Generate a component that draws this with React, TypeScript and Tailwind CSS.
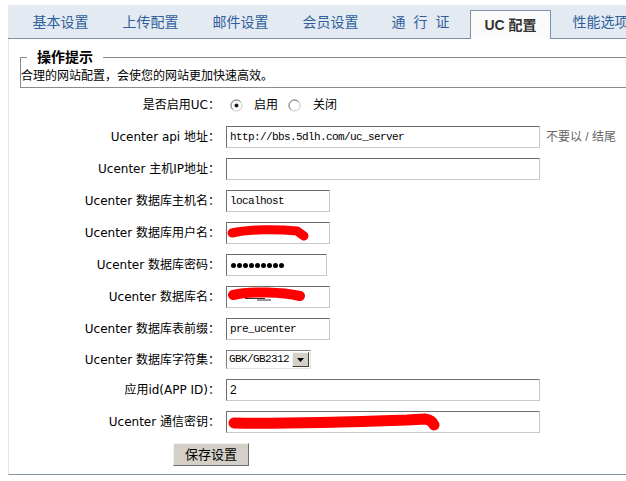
import React from 'react'

const tabs = ['基本设置', '上传配置', '邮件设置', '会员设置', '通 行 证', 'UC 配置', '性能选项']
const activeTab = 'UC 配置'

const sans = "font-['Liberation_Sans','Noto_Sans_CJK_SC',sans-serif]"
const labelFont = "font-['DejaVu_Sans','Noto_Sans_CJK_SC',sans-serif]"
const mono = "font-['Liberation_Mono','Noto_Sans_CJK_SC',monospace] text-[11px] tracking-[-0.6px]"

function Row({ label, children }: { label: string; children: React.ReactNode }) {
  return (
    <div className="flex items-center py-[5px]">
      <div className={`w-[211px] shrink-0 text-right text-[12px] leading-[14px] text-black ${labelFont}`}>{label}</div>
      <div className="ml-[6px] flex min-h-[19px] items-center">{children}</div>
    </div>
  )
}

// sunken text box, old-school two-tone border
function Field({ className, children }: { className: string; children?: React.ReactNode }) {
  return (
    <div
      className={`relative flex h-[22px] shrink-0 items-center overflow-hidden border border-t-[#6e6e6e] border-l-[#6e6e6e] border-r-[#c9c9c9] border-b-[#c9c9c9] bg-white pl-[3px] ${className}`}
    >
      {children}
    </div>
  )
}

function Radio({ checked }: { checked?: boolean }) {
  return (
    <svg width="13" height="13" viewBox="0 0 13 13" className="shrink-0">
      <circle cx="6.5" cy="6.5" r="5.5" fill="#fff" stroke="#c4c4c4" />
      <path d="M2.6 10.4 A5.5 5.5 0 0 1 10.4 2.6" fill="none" stroke="#7d7d7d" />
      {checked && <circle cx="6.5" cy="6.5" r="2" fill="#1a1a1a" />}
    </svg>
  )
}

// red marker strokes covering the private values
function Scribble({ d, w }: { d: string; w: number }) {
  return (
    <svg className="absolute inset-0" width="100%" height="100%">
      <path d={d} fill="none" stroke="#ff0000" strokeWidth={w} strokeLinecap="round" strokeLinejoin="round" />
    </svg>
  )
}

export default function App() {
  return (
    <div className={`h-[481px] w-[626px] overflow-hidden bg-white pt-[5px] ${sans}`}>
      <div className="ml-[8px] w-[720px]">
        {/* Tabs */}
        <div className="flex h-[34px] items-end border-b border-[#7f93a8] bg-[#e4eaf2] pl-[12px]">
          {tabs.map((t) =>
            t === activeTab ? (
              <div
                key={t}
                className="mr-[9px] -mb-px flex h-[29px] w-[81px] shrink-0 items-center justify-center border border-b-0 border-[#7f93a8] bg-[#fbfbfb] text-[14px] font-bold text-[#333]"
              >
                {t}
              </div>
            ) : (
              <div
                key={t}
                className="mr-[9px] flex h-[28px] w-[81px] shrink-0 items-center justify-center whitespace-pre pb-[4px] text-[14px] text-[#2f5f9a] [word-spacing:4px]"
              >
                {t}
              </div>
            )
          )}
        </div>

        {/* Panel */}
        <div className="border-b border-l border-b-[#7f93a8] border-l-[#e3e3e3] pt-[10px] pb-[3px]">
          <fieldset className="ml-[11px] border border-[#8a8a8a] pb-[2px]">
            <legend className="ml-[6px] px-[10px] text-[14px] font-bold leading-[16px] text-black">操作提示</legend>
            <div className="pt-[2px] text-[12px] leading-[18px] text-black">合理的网站配置，会使您的网站更加快速高效。</div>
          </fieldset>

          <div className="mt-[1px]">
            <Row label="是否启用UC：">
              <div className="flex h-[22px] items-center text-[12px]">
                <span className="ml-[4px]"><Radio checked /></span>
                <span className="ml-[11px]">启用</span>
                <span className="ml-[10px]"><Radio /></span>
                <span className="ml-[12px]">关闭</span>
              </div>
            </Row>

            <Row label="Ucenter api 地址：">
              <Field className="w-[314px]">
                <span className={mono}>http://bbs.5dlh.com/uc_server</span>
              </Field>
              <span className="ml-[6px] whitespace-pre text-[12px] text-[#666]">不要以 / 结尾</span>
            </Row>

            <Row label="Ucenter 主机IP地址：">
              <Field className="w-[314px]" />
            </Row>

            <Row label="Ucenter 数据库主机名：">
              <Field className="w-[104px]">
                <span className={mono}>localhost</span>
              </Field>
            </Row>

            <Row label="Ucenter 数据库用户名：">
              <Field className="w-[104px]">
                <Scribble d="M5 10 C 22 6, 50 6, 70 8 L 77 13" w={9} />
              </Field>
            </Row>

            <Row label="Ucenter 数据库密码：">
              <Field className="w-[101px]">
                <div className="ml-[1px] flex gap-[1px]">
                  {Array.from({ length: 9 }).map((_, i) => (
                    <span key={i} className="h-[5px] w-[5px] rounded-full bg-black" />
                  ))}
                </div>
              </Field>
            </Row>

            <Row label="Ucenter 数据库名：">
              <Field className="w-[104px]">
                <Scribble d="M6 8 C 25 4, 55 5, 73 9" w={10} />
                <svg className="absolute inset-0" width="100%" height="100%">
                  <path d="M18 11.5 L 38 11.5 M30 13 L 44 13" stroke="#333" strokeWidth="1" />
                </svg>
              </Field>
            </Row>

            <Row label="Ucenter 数据库表前缀：">
              <Field className="w-[104px]">
                <span className={mono}>pre_ucenter</span>
              </Field>
            </Row>

            <Row label="Ucenter 数据库字符集：">
              <div className="flex h-[19px] w-[85px] items-center border border-t-[#808080] border-l-[#808080] border-r-[#e4e4e4] border-b-[#e4e4e4] bg-white">
                <span className={`flex-1 pl-[2px] ${mono}`}>GBK/GB2312</span>
                <span className="mr-[1px] flex h-[15px] w-[17px] items-center justify-center border border-t-[#f4f3ef] border-l-[#f4f3ef] border-r-[#404040] border-b-[#404040] bg-[#d4d0c8]">
                  <svg width="7" height="4" viewBox="0 0 7 4">
                    <path d="M0 0 H7 L3.5 4 Z" fill="#000" />
                  </svg>
                </span>
              </div>
            </Row>

            <Row label="应用id(APP ID)：">
              <Field className="w-[314px]">
                <span className="text-[12px] text-black">2</span>
              </Field>
            </Row>

            <Row label="Ucenter 通信密钥：">
              <Field className="w-[314px]">
                <Scribble d="M7 11 C 60 12, 120 10, 180 8 L 198 7 Q 205 8 207 13" w={11} />
              </Field>
            </Row>

            <div className="flex py-[5px] pl-[164px]">
              <button className="h-[23px] w-[76px] border border-t-[#f4f3ef] border-l-[#f4f3ef] border-r-[#6f6f6f] border-b-[#6f6f6f] bg-[#d4d0c8] text-[13px] leading-none text-black">
                保存设置
              </button>
            </div>
          </div>
        </div>
      </div>
    </div>
  )
}
